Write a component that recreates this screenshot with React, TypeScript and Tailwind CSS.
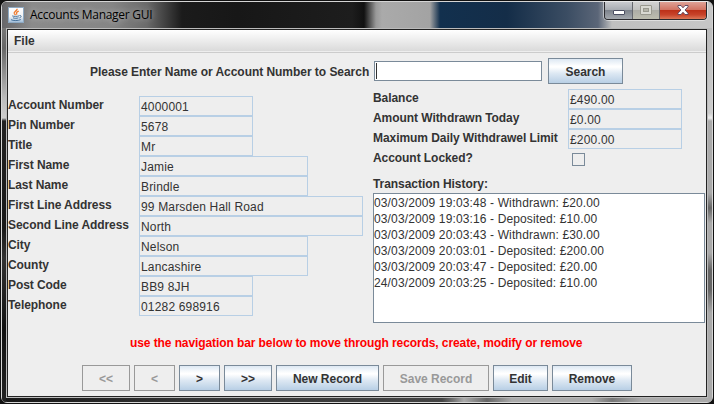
import React from "react";

const FONT = "font-['Liberation_Sans',Arial,sans-serif]";

const SMALL = "w-[114px]";
const MEDIUM = "w-[169px]";
const LARGE = "w-[224px]";

const details = [
  { label: "Account Number", value: "4000001", width: SMALL },
  { label: "Pin Number", value: "5678", width: SMALL },
  { label: "Title", value: "Mr", width: SMALL },
  { label: "First Name", value: "Jamie", width: MEDIUM },
  { label: "Last Name", value: "Brindle", width: MEDIUM },
  { label: "First Line Address", value: "99 Marsden Hall Road", width: LARGE },
  { label: "Second Line Address", value: "North", width: LARGE },
  { label: "City", value: "Nelson", width: MEDIUM },
  { label: "County", value: "Lancashire", width: MEDIUM },
  { label: "Post Code", value: "BB9 8JH", width: SMALL },
  { label: "Telephone", value: "01282 698916", width: SMALL },
];

const limits = [
  { label: "Balance", value: "£490.00" },
  { label: "Amount Withdrawn Today", value: "£0.00" },
  { label: "Maximum Daily Withdrawel Limit", value: "£200.00" },
];

const history = [
  "03/03/2009 19:03:48 - Withdrawn: £20.00",
  "03/03/2009 19:03:16 - Deposited: £10.00",
  "03/03/2009 20:03:43 - Withdrawn: £30.00",
  "03/03/2009 20:03:01 - Deposited: £200.00",
  "03/03/2009 20:03:47 - Deposited: £20.00",
  "24/03/2009 20:03:25 - Deposited: £10.00",
];

const navigation = [
  { label: "<<", width: "w-12", disabled: true },
  { label: "<", width: "w-[41px]", disabled: true },
  { label: ">", width: "w-[41px]" },
  { label: ">>", width: "w-12" },
  { label: "New Record", width: "w-[103px]" },
  { label: "Save Record", width: "w-[106px]", disabled: true },
  { label: "Edit", width: "w-[55px]" },
  { label: "Remove", width: "w-20" },
];

function Button({ label, width, disabled }: { label: string; width: string; disabled?: boolean }) {
  const look = disabled
    ? "border-[#999999] bg-[#eeeeee] text-[#999999]"
    : "border-[#7a8a99] bg-[linear-gradient(#dde8f3_0%,#ffffff_30%,#ffffff_34%,#dde8f3_60%,#b8cfe5_100%)] text-[#333333]";
  return (
    <button
      disabled={disabled}
      className={`flex h-[26px] shrink-0 items-center justify-center border pt-px font-bold tracking-[-0.03px] whitespace-nowrap ${width} ${look}`}
    >
      {label}
    </button>
  );
}

function Field({ value, width }: { value: string; width: string }) {
  return (
    <div className={`h-5 border border-[#b8cfe5] pl-px leading-5 tracking-[0.17px] whitespace-nowrap ${width}`}>
      {value}
    </div>
  );
}

function JavaCup() {
  return (
    <svg viewBox="0 0 16 16" className="size-4 shrink-0">
      <defs>
        <linearGradient id="tile" x1="0" y1="0" x2="0" y2="1">
          <stop offset="0" stopColor="#ffffff" />
          <stop offset="0.6" stopColor="#f0f2f4" />
          <stop offset="1" stopColor="#9dbbd8" />
        </linearGradient>
      </defs>
      <rect x="0.5" y="0.5" width="15" height="15" fill="url(#tile)" stroke="#8ea9c2" />
      <path d="M9.2 1.8C9.4 3.9 5.2 4.6 6.3 6.6L7.6 8.2M10.8 4.2C8.4 5 8 6 9 7.7" fill="none" stroke="#ef7d32" strokeWidth="1.3" />
      <path d="M4.2 8.9C6 9.6 9 9.5 11 8.9M5 10.8C6.6 11.5 9 11.4 10.4 10.8M3 12.7C5 13.9 10.6 13.9 12.8 12.5M11.4 8.6C14 8 13.4 10.6 11.4 10.9" fill="none" stroke="#46729c" strokeWidth="1" />
    </svg>
  );
}

function WindowControls() {
  return (
    <div className="flex h-[18px] w-[103px] shrink-0 rounded-b-[4px] border border-t-0 border-[#2a2a2e] shadow-[0_0_0_1px_#ffffff77]">
      <div className="flex w-[28px] justify-center rounded-bl-[3px] border-r border-[#66686e] bg-[linear-gradient(#c9cbcf_0%,#a9adb3_45%,#7d838c_50%,#a4a8ae_100%)] pt-[8px]">
        <div className="h-[5px] w-3 rounded-[1px] border border-[#4b4e62] bg-white" />
      </div>
      <div className="flex w-[27px] justify-center border-r border-[#66686e] bg-[linear-gradient(#d2d2d2_0%,#c2c2c0_45%,#adada6_50%,#bdbdaf_100%)] pt-[3px]">
        <svg viewBox="0 0 12 10" className="h-[10px] w-3">
          <rect x="0.5" y="0.5" width="11" height="9" rx="0.5" fill="#d9d9d2" stroke="#99998f" />
          <rect x="3.5" y="3.5" width="5" height="3" fill="#b5b5aa" stroke="#99998f" />
        </svg>
      </div>
      <div className="flex flex-1 justify-center rounded-br-[3px] bg-[linear-gradient(#dfa296_0%,#d27463_45%,#bd3119_50%,#c8432a_75%,#dc7858_100%)] pt-[3px]">
        <svg viewBox="0 0 12 10" className="h-[10px] w-3">
          <path d="M1 0.5H4L6 2.8L8 0.5H11V1.8L8 5L11 8.2V9.5H8L6 7.2L4 9.5H1V8.2L4 5L1 1.8Z" fill="#ffffff" stroke="#57415a" strokeWidth="0.9" />
        </svg>
      </div>
    </div>
  );
}

function TitleBar() {
  return (
    <div className="flex h-[26px] items-start justify-between rounded-t-[5px] bg-[linear-gradient(90deg,#666669_0px,#8b8b8b_30px,#858585_110px,#6a6a6a_145px,#1b1b1b_180px,#171717_235px,#1d1d1d_350px,#111_362px,#999_374px,#aaa_380px,#a3a3a3_428px,#12304e_438px,#142d48_505px,#3b4d63_565px,#5b6678_596px,#c0c0c0_610px,#c6c6c6_700px)] pr-[5px] pl-[6px]">
      <div className="flex items-center gap-[6px] pt-[5px]">
        <JavaCup />
        <span className="font-['Open_Sans','Noto_Sans',sans-serif] text-[12px] leading-4 tracking-[-0.27px] whitespace-nowrap text-black [text-shadow:0_0_6px_#ffffff99]">
          Accounts Manager GUI
        </span>
      </div>
      <WindowControls />
    </div>
  );
}

export default function App() {
  return (
    <div className={`flex h-[404px] w-[714px] overflow-hidden bg-[#111111] px-px pt-px pb-px text-[12px] text-[#333333] ${FONT}`}>
      <div className="flex h-[402px] w-[712px] flex-col rounded-[6px] border border-[#d5d5d5] bg-[linear-gradient(90deg,#181818_0px,#333_180px,#444_440px,#777_452px,#aaa_462px,#666_485px,#aaa_510px,#aaa_590px,#777_610px,#aaa_640px)]">
        <TitleBar />
        <div className="flex h-[374px] min-h-0">
          <div className="w-1 shrink-0 rounded-bl-[5px] bg-[linear-gradient(#777_0px,#666_20px,#bbb_70px,#ccc_90px,#222_93px,#181818_200px,#333_230px,#111_300px,#222_374px)]" />
          <div className="flex w-[702px] shrink-0 flex-col">
            <div className="flex h-[370px] flex-col border border-[#bbbbbb]">
              <div className="flex h-[368px] flex-col border border-[#222222] bg-[#eeeeee]">
                <div className="flex h-[23px] shrink-0 border-b border-[#cccccc]">
                  <div className="h-[21px] w-full bg-[linear-gradient(#ffffff,#dadada)] pl-[6px] leading-[22px] font-bold">File</div>
                </div>

                <div className="flex h-[36px] shrink-0 pt-[5px] pl-[82px]">
                  <label className="w-[284px] pt-[4px] leading-5 font-bold tracking-[-0.04px] whitespace-nowrap">
                    Please Enter Name or Account Number to Search
                  </label>
                  <div className="mt-[3px] mr-[6px] flex h-5 w-[168px] border border-[#7a8a99] bg-white py-px pl-px">
                    <div className="w-px bg-[#333333]" />
                  </div>
                  <Button label="Search" width="w-[75px]" />
                </div>

                <div className="flex h-[235px] shrink-0">
                  <div className="w-[365px] shrink-0 pt-[6px]">
                    {details.map((row) => (
                      <div key={row.label} className="flex h-5">
                        <span className="w-[131px] shrink-0 leading-5 font-bold tracking-[-0.07px] whitespace-nowrap">{row.label}</span>
                        <div className="pt-px">
                          <Field value={row.value} width={row.width} />
                        </div>
                      </div>
                    ))}
                  </div>
                  <div className="w-[332px] shrink-0">
                    {limits.map((row) => (
                      <div key={row.label} className="flex h-5">
                        <span className="-mt-px w-[195px] shrink-0 leading-5 font-bold tracking-[-0.06px] whitespace-nowrap">{row.label}</span>
                        <Field value={row.value} width={SMALL} />
                      </div>
                    ))}
                    <div className="flex h-5">
                      <span className="-mt-px w-[199px] shrink-0 leading-5 font-bold tracking-[-0.06px]">Account Locked?</span>
                      <div className="mt-1 size-[13px] border border-[#7a8a99]" />
                    </div>
                    <div className="h-6 pt-[5px] leading-5 font-bold tracking-[-0.06px]">Transaction History:</div>
                    <div className="h-[130px] border border-[#7a8a99] bg-white pt-px leading-4 tracking-[0.13px]">
                      {history.map((line) => (
                        <div key={line} className="whitespace-nowrap">{line}</div>
                      ))}
                    </div>
                  </div>
                </div>

                <p className="h-[41px] shrink-0 pt-[9px] pl-[122px] leading-5 font-bold tracking-[-0.09px] whitespace-nowrap text-[#ff0000]">
                  use the navigation bar below to move through records, create, modify or remove
                </p>
                <div className="flex gap-1 pl-[74px]">
                  {navigation.map((item) => (
                    <Button key={item.label} {...item} />
                  ))}
                </div>
              </div>
            </div>
          </div>
          <div className="w-1 shrink-0 rounded-br-[5px] bg-[linear-gradient(#bbb_0px,#ccc_85px,#eee_90px,#aaa_93px,#aaa_165px,#666_180px,#aaa_195px,#aaa_225px,#666_242px,#666_262px,#aaa_285px,#aaa_374px)]" />
        </div>
      </div>
    </div>
  );
}
